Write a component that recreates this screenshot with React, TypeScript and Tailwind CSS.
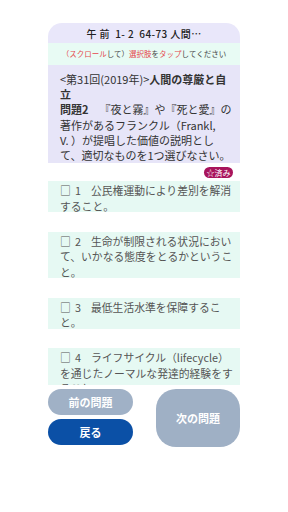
const options = [
  { no: 1, text: '公民権運動により差別を解消すること。' },
  { no: 2, text: '生命が制限される状況において、いかなる態度をとるかということ。' },
  { no: 3, text: '最低生活水準を保障すること。' },
  { no: 4, text: 'ライフサイクル（lifecycle）を通じたノーマルな発達的経験をすること。' },
  { no: 5, text: '社会的な役割を与えること。' },
];

const App: React.FC = () => {
  return (
    <div
      className="w-[288px] h-[512px] bg-white flex flex-col items-center pt-[23px] [text-spacing-trim:space-all]"
      style={{ fontFamily: '"Noto Sans CJK JP", "Noto Sans", sans-serif' }}
    >
      <div className="w-[192px] flex flex-col">
        <div className="h-[362px] overflow-hidden rounded-t-[14px] flex flex-col">
          <div className="h-[20px] shrink-0 bg-[#e9e7fa] flex items-center justify-center text-[10px] font-medium tracking-[0.4px] text-[#222] whitespace-pre">
            午 前  1- 2  64-73 人間…
          </div>
          <div className="h-[22px] shrink-0 bg-[#e8fbf4] flex items-center justify-center text-[7.5px] text-[#444]">
            <span className="text-[#e5484d]">（スクロール</span>して）
            <span className="text-[#e5484d]">選択肢</span>を
            <span className="text-[#e5484d]">タップ</span>してください
          </div>
          {/* question text, broken where the app breaks it */}
          <div className="shrink-0 bg-[#e7e5f8] pl-[12px] pt-[7px] text-[11px] leading-[15.2px] text-[#333] whitespace-nowrap">
            &lt;第31回(2019年)&gt;<span className="font-bold">人間の尊厳と自</span>
            <br />
            <span className="font-bold">立</span>
            <br />
            <span className="font-bold">問題2</span>　『夜と霧』や『死と愛』の
            <br />
            著作があるフランクル（Frankl,
            <br />
            V. ）が提唱した価値の説明とし
            <br />
            て、適切なものを1つ選びなさい。
          </div>
          <div className="flex justify-end pr-[7px] mt-[4px] mb-[3px] shrink-0">
            <span className="h-[11px] w-[29px] rounded-full bg-[#a8145c] text-white text-[8px] leading-[11px] flex items-center justify-center">
              ☆済み
            </span>
          </div>
          <div className="flex flex-col gap-[19.5px]">
            {options.map((o) => (
              <div key={o.no} className="shrink-0 flex flex-col bg-[#e6f9f3] pl-[12px] pr-[6px] pt-[2px]">
                <div className="-mb-[2px] text-[10.8px] leading-[15.5px] text-[#555]">
                  <span className="inline-block w-[15px]">□</span>
                  {o.no}
                  <span className="inline-block w-[10px]"></span>
                  {o.text}
                </div>
              </div>
            ))}
          </div>
        </div>
        <div className="flex justify-between mt-[4px]">
          <div className="w-[85px] flex flex-col gap-[4px]">
            <button className="h-[26px] rounded-full bg-[#a0b1c6] text-white text-[11px] font-bold">
              前の問題
            </button>
            <button className="h-[26px] rounded-full bg-[#0b50a6] text-white text-[11px] font-bold">
              戻る
            </button>
          </div>
          <button className="w-[84px] h-[58px] rounded-[20px] bg-[#9fb0c5] text-white text-[11px] font-bold">
            次の問題
          </button>
        </div>
      </div>
    </div>
  );
};

export default App;
